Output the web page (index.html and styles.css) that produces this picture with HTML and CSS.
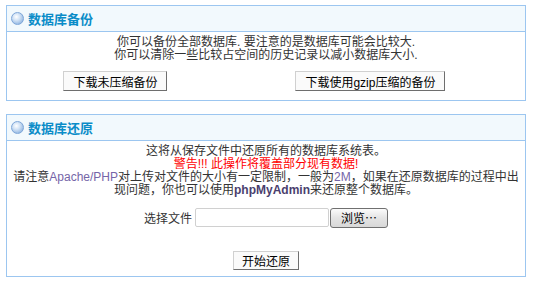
FILE: index.html
```html
<!DOCTYPE html>
<html lang="zh-CN">
<head>
    <meta charset="UTF-8">
    <title>数据库备份</title>
    <link rel="stylesheet" href="styles.css">
</head>
<body>
    <div class="page">
        <div class="box">
            <div class="box-head"><span class="ball"></span>数据库备份</div>
            <div class="box-body">
                <p>你可以备份全部数据库. 要注意的是数据库可能会比较大.<br>你可以清除一些比较占空间的历史记录以减小数据库大小.</p>
                <table class="btn-row">
                    <tr>
                        <td><button type="button" class="btn">下载未压缩备份</button></td>
                        <td><button type="button" class="btn">下载使用gzip压缩的备份</button></td>
                    </tr>
                </table>
            </div>
        </div>

        <div class="box second">
            <div class="box-head"><span class="ball"></span>数据库还原</div>
            <div class="box-body restore">
                <p>这将从保存文件中还原所有的数据库系统表。<br>
                <span class="warn">警告!!! 此操作将覆盖部分现有数据!</span><br>
                请注意<span class="hl">Apache/PHP</span>对上传对文件的大小有一定限制，一般为<span class="hl">2M</span>，如果在还原数据库的过程中出<br>现问题，你也可以使用<b class="pma">phpMyAdmin</b>来还原整个数据库。</p>
                <div class="file-row">
                    <label for="restoreFile">选择文件</label>
                    <input type="text" id="restoreFile" class="file-text">
                    <button type="button" class="browse">浏览…</button>
                </div>
                <div class="submit-row">
                    <button type="submit" class="btn">开始还原</button>
                </div>
            </div>
        </div>
    </div>
</body>
</html>
```

FILE: styles.css
```css
body {
    margin: 0;
    font-family: "Liberation Sans", "Noto Sans CJK SC", sans-serif;
    font-size: 12px;
    color: #333;
    background: #fff;
}
.page {
    padding: 5px 9px 0 6px;
}
.box {
    border: 1px solid #9cc6f0;
}
.second {
    margin-top: 13px;
}
.box-head {
    height: 25px;
    display: flex;
    align-items: center;
    gap: 4px;
    padding-left: 4px;
    background: #f2f9fd;
    border-bottom: 1px solid #9cc6f0;
    font-family: "Noto Sans CJK SC", sans-serif;
    font-size: 13px;
    font-weight: bold;
    color: #0a8cc8;
}
.ball {
    width: 11px;
    height: 11px;
    border-radius: 50%;
    border: 1px solid #7ea6d8;
    background: radial-gradient(circle at 40% 35%, #ffffff 0, #d4e4f6 35%, #93b7e2 80%, #6f97cf 100%);
}
.box-body {
    padding: 4px 4px 4px;
    text-align: center;
}
.restore {
    padding-bottom: 6px;
}
p {
    margin: 0;
    line-height: 13px;
}
.warn {
    color: #ff0000;
}
.hl {
    color: #7565a8;
}
.pma {
    color: #4a3f6e;
}
.btn-row {
    width: 100%;
    border-collapse: collapse;
    margin: 9px 0 5px;
}
.btn-row td {
    padding: 0;
    text-align: center;
}
.btn {
    height: 20px;
    padding: 0 9px;
    font-family: "Liberation Sans", "Noto Sans CJK SC", sans-serif;
    font-size: 12px;
    color: #000;
    background: #fafafa;
    border: 1px solid;
    border-color: #d0d0d0 #6e6e6e #6e6e6e #d0d0d0;
    cursor: pointer;
}
.file-row {
    display: flex;
    justify-content: center;
    align-items: center;
    gap: 3px;
    margin-top: 11px;
    height: 19px;
}
.file-text {
    box-sizing: border-box;
    width: 134px;
    height: 19px;
    margin: 0;
    border: 1px solid #d0d0d0;
    border-radius: 2px;
}
.browse {
    box-sizing: border-box;
    width: 58px;
    height: 20px;
    margin-left: -2px;
    padding: 0;
    font-family: "Noto Sans CJK SC", sans-serif;
    font-size: 12px;
    color: #000;
    border: 1px solid #707070;
    border-radius: 3px;
    background: linear-gradient(#fbfbfb, #e4e4e4 50%, #d8d8d8);
}
.submit-row {
    margin-top: 24px;
}
.submit-row .btn {
    height: 19px;
    width: 66px;
    padding: 0;
}
```
